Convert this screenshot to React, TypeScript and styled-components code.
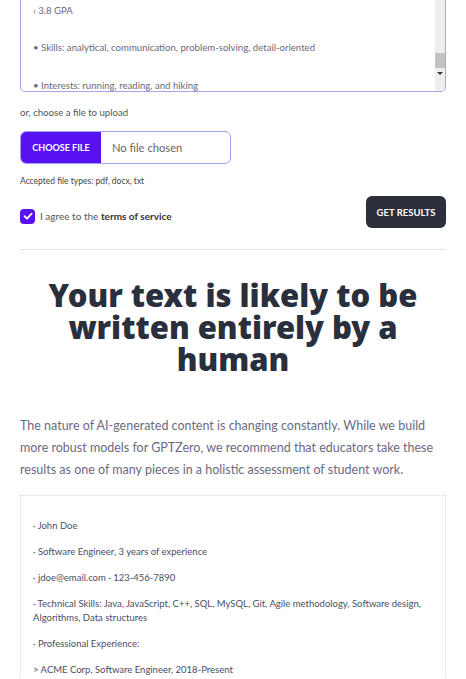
import styled, { createGlobalStyle } from "styled-components";

const GlobalStyle = createGlobalStyle`
  html, body {
    margin: 0;
    padding: 0;
    background: #ffffff;
    font-family: Lato, "Noto Sans", sans-serif;
  }
`;

const Page = styled.div`
  width: 466px;
  padding: 0 20px;
  box-sizing: border-box;
  overflow: hidden;
`;

const TextBox = styled.div`
  display: flex;
  height: 92px;
  box-sizing: border-box;
  border: 1px solid #a3a5f2;
  border-top: none;
  border-radius: 0 0 5px 5px;
  overflow: hidden;
`;

const TextContent = styled.div`
  flex: 1;
  padding: 1.5px 12px 0;
  font-size: 9.6px;
  line-height: 18.75px;
  color: #6a6a7c;
  white-space: pre;
`;

const Scrollbar = styled.div`
  width: 10px;
  display: flex;
  flex-direction: column;
  align-items: center;
  background: #eeeeee;
`;

const Thumb = styled.div`
  width: 10px;
  height: 15px;
  margin-top: 53px;
  background: #c4c0c4;
`;

const Arrow = styled.div`
  width: 0;
  height: 0;
  margin-top: 4px;
  border-left: 3px solid transparent;
  border-right: 3px solid transparent;
  border-top: 3px solid #333;
`;

const Hint = styled.div`
  margin-top: 14px;
  font-size: 9.6px;
  color: #555;
  line-height: 14px;
`;

const FileInput = styled.div`
  margin-top: 11px;
  display: flex;
  width: 211px;
  height: 33px;
  box-sizing: border-box;
  border: 1px solid #9ea1ee;
  border-radius: 6px;
  overflow: hidden;
`;

const FileButton = styled.div`
  width: 80px;
  display: flex;
  align-items: center;
  justify-content: center;
  background: #5812f2;
  color: #fff;
  font-size: 9px;
  font-weight: 700;
`;

const FileName = styled.div`
  display: flex;
  align-items: center;
  padding-left: 11px;
  font-size: 11.2px;
  color: #666;
`;

const Accepted = styled.div`
  margin-top: 11px;
  font-size: 8.5px;
  color: #444;
  line-height: 12px;
`;

const ActionRow = styled.div`
  margin-top: 9px;
  display: flex;
  align-items: center;
  justify-content: space-between;
`;

const Agree = styled.label`
  display: flex;
  align-items: center;
  gap: 5px;
  font-size: 10px;
  color: #555;
  margin-top: 8px;
`;

const Check = styled.span`
  width: 15px;
  height: 15px;
  border-radius: 4px;
  background: #5812f2;
  display: flex;
  align-items: center;
  justify-content: center;
`;

const Strong = styled.span`
  font-weight: 700;
  color: #333;
`;

const ResultsButton = styled.button`
  width: 80px;
  height: 32px;
  border: none;
  border-radius: 6px;
  background: #2b2f3c;
  color: #fff;
  font-family: inherit;
  font-size: 9.5px;
  font-weight: 700;
  padding: 0;
`;

const Divider = styled.hr`
  margin: 21px 0 0;
  border: none;
  border-top: 1px solid #e4e4e4;
`;

const Heading = styled.h1`
  margin: 29px 0 0;
  text-align: center;
  font-family: "Noto Sans", sans-serif;
  font-size: 31px;
  font-weight: 900;
  line-height: 32px;
  color: #2a2f3e;
  padding: 0 20px;
`;

const Lead = styled.p`
  margin: 40px 0 0;
  font-size: 12.5px;
  line-height: 22px;
  color: #6b6a82;
`;

const ResultBox = styled.div`
  margin-top: 14px;
  border: 1px dotted #d8d8d8;
  padding: 23px 12px 20px;
`;

const ResultLine = styled.p`
  margin: 0 0 12px;
  font-size: 9.5px;
  line-height: 14px;
  color: #4b4d66;
`;

const resumeLines = [
  "· John Doe",
  "· Software Engineer, 3 years of experience",
  "· jdoe@email.com · 123-456-7890",
  "· Technical Skills: Java, JavaScript, C++, SQL, MySQL, Git, Agile methodology, Software design, Algorithms, Data structures",
  "· Professional Experience:",
  "> ACME Corp, Software Engineer, 2018-Present",
];

export default function App() {
  return (
    <Page>
      <GlobalStyle />
      <TextBox>
        <TextContent>
          {"› 3.8 GPA\n\n• Skills: analytical, communication, problem-solving, detail-oriented\n\n• Interests: running, reading, and hiking"}
        </TextContent>
        <Scrollbar>
          <Thumb />
          <Arrow />
        </Scrollbar>
      </TextBox>
      <Hint>or, choose a file to upload</Hint>
      <FileInput>
        <FileButton>CHOOSE FILE</FileButton>
        <FileName>No file chosen</FileName>
      </FileInput>
      <Accepted>Accepted file types: pdf, docx, txt</Accepted>
      <ActionRow>
        <Agree>
          <Check>
            <svg width="10" height="10" viewBox="0 0 10 10">
              <path d="M1.5 5.2 L4 7.6 L8.6 2.6" stroke="#fff" strokeWidth="1.8" fill="none" strokeLinecap="round" strokeLinejoin="round" />
            </svg>
          </Check>
          <span>
            I agree to the <Strong>terms of service</Strong>
          </span>
        </Agree>
        <ResultsButton>GET RESULTS</ResultsButton>
      </ActionRow>
      <Divider />
      <Heading>Your text is likely to be written entirely by a human</Heading>
      <Lead>
        The nature of AI-generated content is changing constantly. While we build more robust models for GPTZero, we recommend that educators take these results as one of many pieces in a holistic assessment of student work.
      </Lead>
      <ResultBox>
        {resumeLines.map((line) => (
          <ResultLine key={line}>{line}</ResultLine>
        ))}
      </ResultBox>
    </Page>
  );
}
